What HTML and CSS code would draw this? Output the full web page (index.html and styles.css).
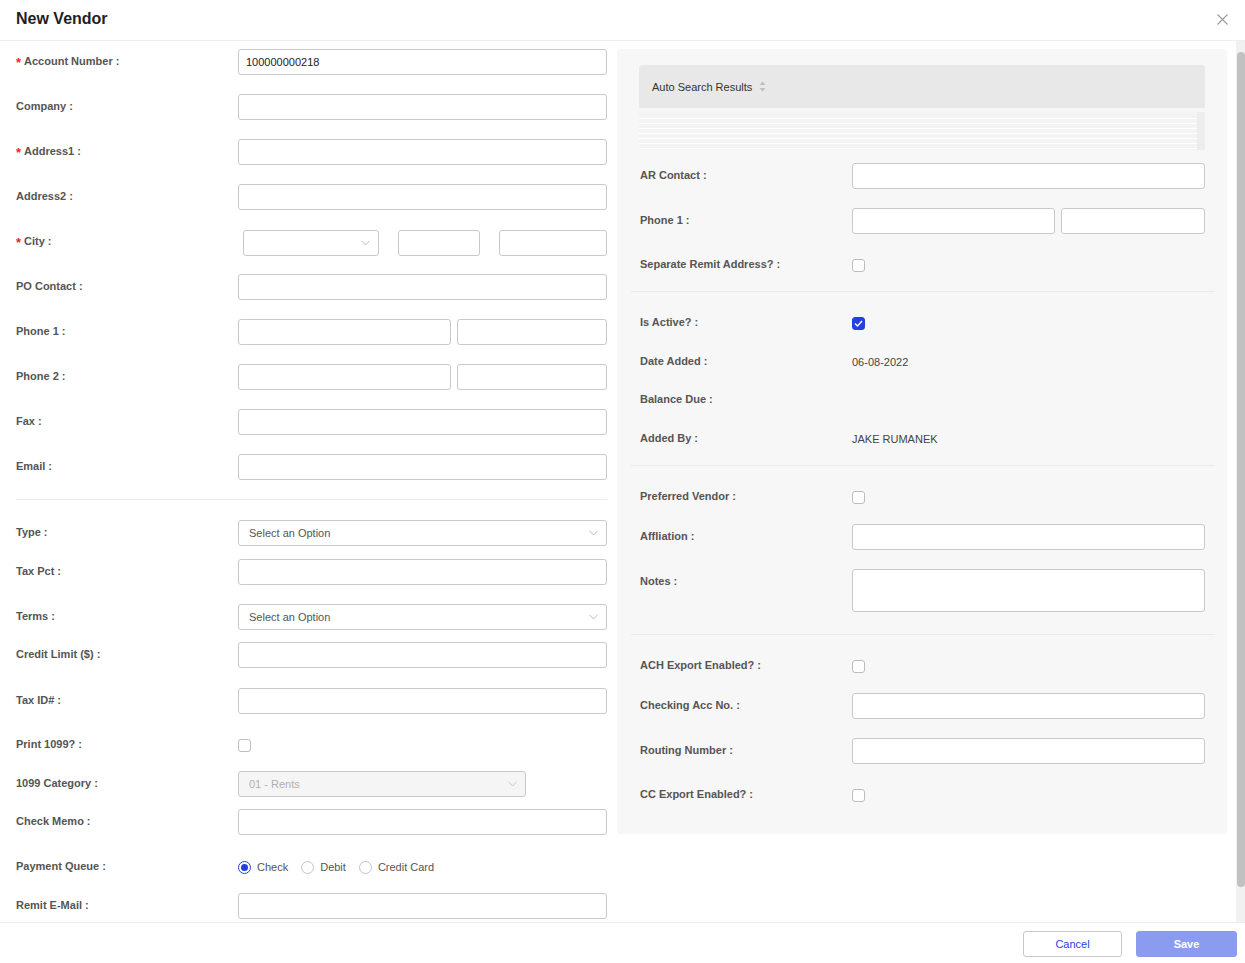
FILE: index.html
```html
<!DOCTYPE html>
<html>
<head>
<meta charset="utf-8">
<link rel="stylesheet" href="styles.css">
</head>
<body>
<div class="modal">
  <div class="modal-head">
    <div class="title">New Vendor</div>
    <svg class="close" width="11" height="11" viewBox="0 0 11 11"><path d="M0.5 0.5L10.5 10.5M10.5 0.5L0.5 10.5" stroke="#9a9a9a" stroke-width="1.1" fill="none"/></svg>
  </div>
  <div class="modal-body">
    <div class="content">
    <div class="cols">
      <div class="left">
        <div class="row"><div class="lbl"><span class="req">*</span>Account Number<span class="colon">:</span></div><div class="ctl"><div class="input"><span class="val">100000000218</span></div></div></div>
        <div class="row"><div class="lbl">Company<span class="colon">:</span></div><div class="ctl"><div class="input"></div></div></div>
        <div class="row"><div class="lbl"><span class="req">*</span>Address1<span class="colon">:</span></div><div class="ctl"><div class="input"></div></div></div>
        <div class="row"><div class="lbl">Address2<span class="colon">:</span></div><div class="ctl"><div class="input"></div></div></div>
        <div class="row city-row"><div class="lbl"><span class="req">*</span>City<span class="colon">:</span></div><div class="ctl city">
          <div class="input select city-sel"><span></span><svg class="chev" width="9" height="6" viewBox="0 0 9 6"><polyline points="0.5,0.8 4.5,5 8.5,0.8" fill="none" stroke="#bdbdbd" stroke-width="1"/></svg></div>
          <div class="input city-st"></div>
          <div class="input city-zip"></div>
        </div></div>
        <div class="row"><div class="lbl">PO Contact<span class="colon">:</span></div><div class="ctl"><div class="input"></div></div></div>
        <div class="row"><div class="lbl">Phone 1<span class="colon">:</span></div><div class="ctl split"><div class="input ph-a"></div><div class="input ph-b"></div></div></div>
        <div class="row"><div class="lbl">Phone 2<span class="colon">:</span></div><div class="ctl split"><div class="input ph-a"></div><div class="input ph-b"></div></div></div>
        <div class="row"><div class="lbl">Fax<span class="colon">:</span></div><div class="ctl"><div class="input"></div></div></div>
        <div class="row"><div class="lbl">Email<span class="colon">:</span></div><div class="ctl"><div class="input"></div></div></div>
        <div class="divider-l"></div>
        <div class="row mb13"><div class="lbl">Type<span class="colon">:</span></div><div class="ctl"><div class="input select"><span class="ph">Select an Option</span><svg class="chev" width="9" height="6" viewBox="0 0 9 6"><polyline points="0.5,0.8 4.5,5 8.5,0.8" fill="none" stroke="#bdbdbd" stroke-width="1"/></svg></div></div></div>
        <div class="row mb19"><div class="lbl">Tax Pct<span class="colon">:</span></div><div class="ctl"><div class="input"></div></div></div>
        <div class="row mb12"><div class="lbl">Terms<span class="colon">:</span></div><div class="ctl"><div class="input select"><span class="ph">Select an Option</span><svg class="chev" width="9" height="6" viewBox="0 0 9 6"><polyline points="0.5,0.8 4.5,5 8.5,0.8" fill="none" stroke="#bdbdbd" stroke-width="1"/></svg></div></div></div>
        <div class="row mb20"><div class="lbl">Credit Limit ($)<span class="colon">:</span></div><div class="ctl"><div class="input"></div></div></div>
        <div class="row mb18"><div class="lbl">Tax ID#<span class="colon">:</span></div><div class="ctl"><div class="input"></div></div></div>
        <div class="row mb13"><div class="lbl">Print 1099?<span class="colon">:</span></div><div class="ctl"><span class="cb"></span></div></div>
        <div class="row mb12"><div class="lbl">1099 Category<span class="colon">:</span></div><div class="ctl"><div class="input select disabled cat"><span class="ph">01 - Rents</span><svg class="chev" width="9" height="6" viewBox="0 0 9 6"><polyline points="0.5,0.8 4.5,5 8.5,0.8" fill="none" stroke="#c4c4c4" stroke-width="1"/></svg></div></div></div>
        <div class="row mb19"><div class="lbl">Check Memo<span class="colon">:</span></div><div class="ctl"><div class="input"></div></div></div>
        <div class="row mb13"><div class="lbl">Payment Queue<span class="colon">:</span></div><div class="ctl radios">
          <label class="radio"><span class="rd on"></span>Check</label>
          <label class="radio"><span class="rd"></span>Debit</label>
          <label class="radio"><span class="rd"></span>Credit Card</label>
        </div></div>
        <div class="row mb0"><div class="lbl">Remit E-Mail<span class="colon">:</span></div><div class="ctl"><div class="input"></div></div></div>
      </div>
      <div class="right">
        <div class="tbl-head"><span>Auto Search Results</span><svg class="sorter" width="7" height="11" viewBox="0 0 7 11"><path d="M3.5 0.5L6.5 4H0.5Z" fill="#bfbfbf"/><path d="M3.5 10.5L6.5 7H0.5Z" fill="#bfbfbf"/></svg></div>
        <div class="tbl-body"><div class="stripes"></div><div class="tbl-scroll"></div></div>
        <div class="row r mb19 mt13"><div class="lbl r">AR Contact<span class="colon">:</span></div><div class="ctl"><div class="input"></div></div></div>
        <div class="row r mb18"><div class="lbl r">Phone 1<span class="colon">:</span></div><div class="ctl split"><div class="input rph-a"></div><div class="input rph-b"></div></div></div>
        <div class="row r mb13"><div class="lbl r">Separate Remit Address?<span class="colon">:</span></div><div class="ctl"><span class="cb"></span></div></div>
        <div class="divider-r"></div>
        <div class="row r mb13"><div class="lbl r">Is Active?<span class="colon">:</span></div><div class="ctl"><span class="cb on"><svg width="9" height="7" viewBox="0 0 9 7"><polyline points="1,3.5 3.5,6 8,1" fill="none" stroke="#fff" stroke-width="1.3"/></svg></span></div></div>
        <div class="row r mb12"><div class="lbl r">Date Added<span class="colon">:</span></div><div class="ctl"><span class="txt">06-08-2022</span></div></div>
        <div class="row r mb13"><div class="lbl r">Balance Due<span class="colon">:</span></div><div class="ctl"></div></div>
        <div class="row r mb13"><div class="lbl r">Added By<span class="colon">:</span></div><div class="ctl"><span class="txt">JAKE RUMANEK</span></div></div>
        <div class="divider-r"></div>
        <div class="row r mb14"><div class="lbl r">Preferred Vendor<span class="colon">:</span></div><div class="ctl"><span class="cb"></span></div></div>
        <div class="row r mb19"><div class="lbl r">Affliation<span class="colon">:</span></div><div class="ctl"><div class="input"></div></div></div>
        <div class="row r top mb22"><div class="lbl r">Notes<span class="colon">:</span></div><div class="ctl"><div class="input textarea"></div></div></div>
        <div class="divider-r"></div>
        <div class="row r mb14"><div class="lbl r">ACH Export Enabled?<span class="colon">:</span></div><div class="ctl"><span class="cb"></span></div></div>
        <div class="row r mb19"><div class="lbl r">Checking Acc No.<span class="colon">:</span></div><div class="ctl"><div class="input"></div></div></div>
        <div class="row r mb18"><div class="lbl r">Routing Number<span class="colon">:</span></div><div class="ctl"><div class="input"></div></div></div>
        <div class="row r mb0"><div class="lbl r">CC Export Enabled?<span class="colon">:</span></div><div class="ctl"><span class="cb"></span></div></div>
      </div>
    </div>
    </div>
    <div class="vscroll"><div class="thumb"></div></div>
  </div>
  <div class="modal-foot">
    <button class="btn cancel">Cancel</button>
    <button class="btn save">Save</button>
  </div>
</div>
</body>
</html>
```
FILE: styles.css
```css
* { box-sizing: border-box; }
html, body { margin: 0; padding: 0; }
body {
  font-family: "Liberation Sans", Arial, sans-serif;
  background: #fff;
  color: #333;
  width: 1245px;
  height: 963px;
  overflow: hidden;
}
.modal { display: flex; flex-direction: column; height: 963px; }
.modal-head {
  height: 41px;
  flex: none;
  border-bottom: 1px solid #efefef;
  display: flex;
  align-items: center;
  justify-content: space-between;
  padding: 0 17px 2px 16px;
}
.title { font-size: 16px; font-weight: 700; color: #1f1f1f; }
.close { display: block; margin-top: 1px; }

.modal-body {
  flex: 1;
  min-height: 0;
  display: flex;
  overflow: hidden;
}
.content {
  flex: 1;
  min-width: 0;
  overflow: hidden;
  padding: 8px 9px 0 16px;
}
.vscroll {
  width: 9px;
  flex: none;
  background: #f1f1f1;
  padding: 11px 0 35px 1px;
  display: flex;
}
.thumb { flex: 1; background: #c1c1c1; border-radius: 4px; }

.cols { display: grid; grid-template-columns: 591px 610px; column-gap: 10px; align-items: start; }

.row { display: flex; align-items: center; height: 26px; margin-bottom: 19px; }
.row.top { align-items: flex-start; height: auto; }
.mb0 { margin-bottom: 0; }
.mb12 { margin-bottom: 12px; }
.mb13 { margin-bottom: 13px; }
.mb14 { margin-bottom: 14px; }
.mb18 { margin-bottom: 18px; }
.mb19 { margin-bottom: 19px; }
.mb20 { margin-bottom: 20px; }
.mb22 { margin-bottom: 22px; }
.mt13 { margin-top: 13px; }
.city-row .ctl { padding-top: 1px; }

.lbl {
  width: 222px;
  flex: none;
  font-size: 11px;
  font-weight: 700;
  color: #555;
  line-height: 25px;
  height: 26px;
  white-space: nowrap;
}
.lbl.r { width: 213px; padding-left: 1px; }
.req { color: #f5222d; margin-right: 3px; font-size: 13px; line-height: 1; font-weight: 700; vertical-align: -2px; }
.colon { margin-left: 3px; }
.ctl { flex: 1; display: flex; align-items: center; min-width: 0; }

.input {
  height: 26px;
  width: 100%;
  border: 1px solid #c9c9c9;
  border-radius: 3px;
  background: #fff;
  display: flex;
  align-items: center;
  padding: 0 7px;
  font-size: 11px;
  color: #222;
}
.select { padding: 0 8px 0 10px; justify-content: space-between; color: #555; }
.select .ph { color: #555; }
.chev { display: block; }
.disabled { background: #f5f5f5; }
.disabled .ph { color: #b0b0b0; }
.cat { width: 288px; }
.textarea { height: 43px; }

.city-sel { width: 136px; margin-left: 5px; margin-right: 19px; }
.city-st { width: 82px; margin-right: 19px; }
.city-zip { width: 108px; }
.split { gap: 6px; }
.ph-a { width: 213px; flex: none; }
.ph-b { flex: 1; }
.rph-a { width: 203px; flex: none; }
.rph-b { flex: 1; }

.cb {
  width: 13px; height: 13px;
  border: 1px solid #bdbdbd;
  border-radius: 3px;
  background: #fff;
  display: flex; align-items: center; justify-content: center;
}
.cb.on { background: #2440e2; border-color: #2440e2; }
.cb svg { display: block; }

.radio { display: flex; align-items: center; font-size: 11px; color: #555; margin-right: 13px; }
.rd {
  width: 13px; height: 13px;
  border: 1px solid #c4c4c4;
  border-radius: 50%;
  background: #fff;
  margin-right: 6px;
  position: relative;
}
.rd.on { border-color: #2440e2; }
.rd.on::after {
  content: "";
  position: absolute;
  left: 2px; top: 2px;
  width: 7px; height: 7px;
  border-radius: 50%;
  background: #2440e2;
}

.divider-l { height: 1px; background: #ececec; margin: 0 0 20px 0; }

.right {
  background: #f7f7f7;
  border-radius: 4px;
  padding: 16px 22px 26px 22px;
}
.tbl-head {
  height: 43px;
  background: #e8e8e8;
  border-radius: 4px 4px 0 0;
  display: flex;
  align-items: center;
  padding-left: 13px;
  font-size: 11px;
  color: #333;
}
.sorter { margin-left: 7px; display: block; }
.tbl-body { display: flex; height: 38px; margin-top: 4px; }
.stripes {
  flex: 1;
  background: repeating-linear-gradient(to bottom, #f4f4f4 0px, #f4f4f4 4px, #ffffff 4px, #ffffff 5px);
  background-position: 0 2px;
}
.tbl-scroll { width: 8px; background: #ededed; }
.txt { font-size: 11px; color: #444; }
.divider-r { height: 1px; background: #e9e9e9; margin: 0 -10px 18px -8px; }

.modal-foot {
  height: 41px;
  flex: none;
  border-top: 1px solid #ececec;
  display: flex;
  justify-content: flex-end;
  align-items: center;
  padding: 2px 8px 0 0;
  gap: 14px;
}
.btn {
  height: 26px;
  border-radius: 3px;
  font-family: "Liberation Sans", Arial, sans-serif;
  font-size: 11px;
  cursor: pointer;
}
.cancel { width: 99px; background: #fff; border: 1px solid #c9c9c9; color: #2a3fe0; }
.save { width: 101px; background: #8b9cf0; border: 1px solid #8b9cf0; color: #fff; font-weight: 700; }
```
